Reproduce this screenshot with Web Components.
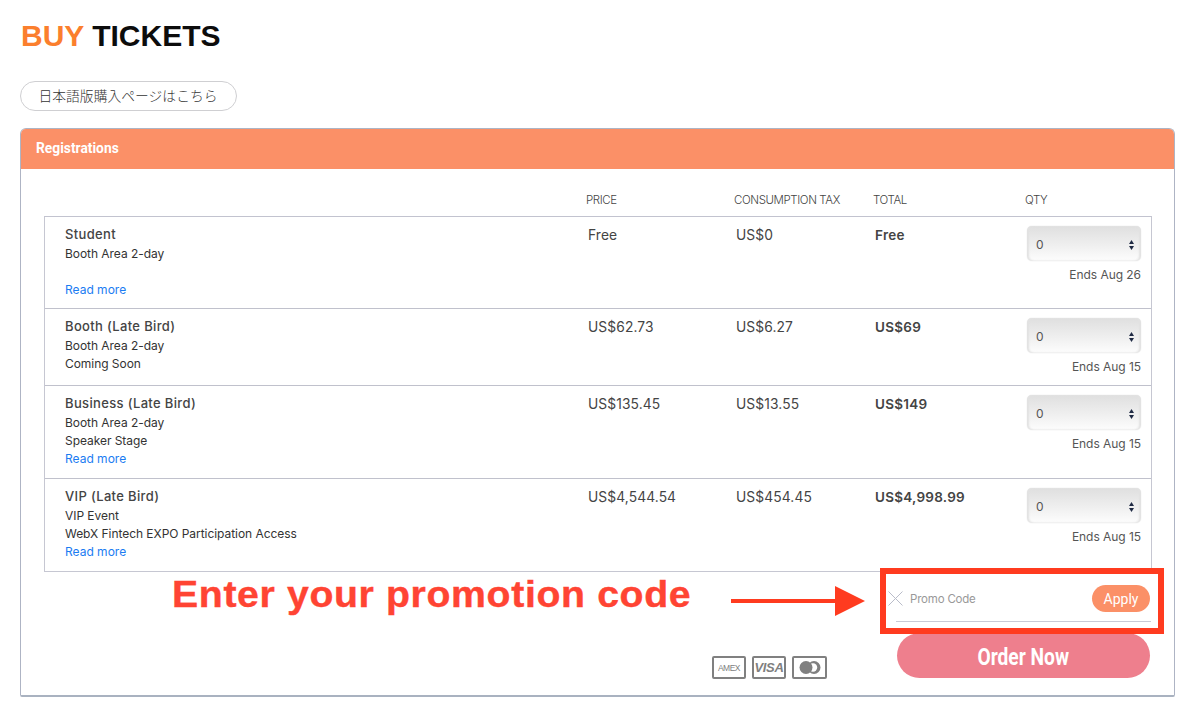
<!DOCTYPE html>
<html lang="en">
<head>
<meta charset="utf-8">
<title>Buy Tickets</title>
<style>
  html, body { margin: 0; background: #fff; }
  body { font-family: Inter, "Noto Sans CJK JP", sans-serif; color: #444; }
</style>
</head>
<body>
<buy-page>
  <ticket-panel heading="Registrations">
    <ticket-row name="Student" price="Free" tax="US$0" total="Free" ends="Ends Aug 26">
      <span>Booth Area 2-day</span>
      <span>&nbsp;</span>
      <a slot="more" href="#">Read more</a>
    </ticket-row>
    <ticket-row name="Booth (Late Bird)" price="US$62.73" tax="US$6.27" total="US$69" ends="Ends Aug 15">
      <span>Booth Area 2-day</span>
      <span>Coming Soon</span>
    </ticket-row>
    <ticket-row name="Business (Late Bird)" price="US$135.45" tax="US$13.55" total="US$149" ends="Ends Aug 15">
      <span>Booth Area 2-day</span>
      <span>Speaker Stage</span>
      <a slot="more" href="#">Read more</a>
    </ticket-row>
    <ticket-row name="VIP (Late Bird)" price="US$4,544.54" tax="US$454.45" total="US$4,998.99" ends="Ends Aug 15">
      <span>VIP Event</span>
      <span>WebX Fintech EXPO Participation Access</span>
      <a slot="more" href="#">Read more</a>
    </ticket-row>
  </ticket-panel>
  <promo-callout></promo-callout>
</buy-page>

<script>
const buyPageTemplate = document.createElement('template');
buyPageTemplate.innerHTML = `
  <style>
    :host {
      display: block;
      position: relative;
      height: 715px;
      box-sizing: border-box;
      padding: 0 25px 0 20px;
      overflow: hidden;
    }
    h1 {
      margin: 0;
      padding: 18px 0 0 1px;
      height: 81px;
      box-sizing: border-box;
      font: bold 30px/36px "Liberation Sans", sans-serif;
      color: #0c0c0c;
    }
    h1 span { color: #fb7f2d; }
    .lang {
      display: inline-flex;
      align-items: center;
      justify-content: center;
      box-sizing: border-box;
      width: 217px;
      height: 30px;
      margin-bottom: 17px;
      padding: 0 1px 3px 0;
      border: 1px solid #cfcfd2;
      border-radius: 15px;
      font: 300 13.8px "Noto Sans CJK JP", sans-serif;
      color: #333;
    }
    .lang-row { display: flex; }
  </style>
  <h1><span>BUY</span> TICKETS</h1>
  <div class="lang-row"><div class="lang">日本語版購入ページはこちら</div></div>
  <slot></slot>
`;

class BuyPage extends HTMLElement {
  constructor() {
    super();
    this.attachShadow({ mode: 'open' }).appendChild(buyPageTemplate.content.cloneNode(true));
  }
}

const ticketPanelTemplate = document.createElement('template');
ticketPanelTemplate.innerHTML = `
  <style>
    :host {
      display: block;
      box-sizing: border-box;
      height: 569px;
      border: 1px solid #aeb4c4;
      border-bottom: 2px solid #a9b2c0;
      border-radius: 6px 6px 2px 2px;
    }
    header {
      box-sizing: border-box;
      height: 40px;
      padding-left: 15px;
      background: #fb9067;
      border-radius: 5px 5px 0 0;
      font: bold 15px/38px Roboto, sans-serif;
      color: #fff;
    }
    header span { display: inline-block; transform: scaleX(.92); transform-origin: left; }
    .labels {
      display: grid;
      grid-template-columns: 542px 148px 139px 152px 125px;
      height: 47px;
      box-sizing: border-box;
      padding: 23px 0 0 23px;
      font-size: 11.5px;
      font-weight: 300;
      line-height: 16px;
      letter-spacing: -.4px;
      color: #444;
    }
    .table {
      margin: 0 22px 0 23px;
      border: 1px solid #c6c7d2;
      border-top-color: #c2c3cf;
    }
    .foot {
      display: flex;
      flex-direction: column;
      align-items: flex-end;
      padding-right: 24px;
    }
    .bottom {
      display: flex;
      align-items: flex-end;
      gap: 70px;
      margin-top: 11px;
    }
  </style>
  <header><span></span></header>
  <div class="labels">
    <span></span><span>PRICE</span><span>CONSUMPTION TAX</span><span>TOTAL</span><span>QTY</span>
  </div>
  <div class="table"><slot></slot></div>
  <div class="foot">
    <promo-field></promo-field>
    <div class="bottom">
      <pay-icons></pay-icons>
      <order-button></order-button>
    </div>
  </div>
`;

class TicketPanel extends HTMLElement {
  constructor() {
    super();
    this.attachShadow({ mode: 'open' }).appendChild(ticketPanelTemplate.content.cloneNode(true));
    this.shadowRoot.querySelector('header span').textContent = this.getAttribute('heading');
  }
}

const ticketRowTemplate = document.createElement('template');
ticketRowTemplate.innerHTML = `
  <style>
    :host {
      display: grid;
      grid-template-columns: 523px 148px 139px 152px 114px;
      box-sizing: border-box;
      padding-left: 20px;
      border-bottom: 1px solid #c0c1cc;
    }
    :host(:last-child) { border-bottom: 0; }
    .cell { padding-top: 8.5px; font-size: 13.8px; line-height: 18px; letter-spacing: .1px; color: #444; }
    .info { padding-top: 8px; padding-bottom: 10px; }
    :host(:first-child) .info { padding-bottom: 9px; }
    .name { font-weight: 500; font-size: 13px; letter-spacing: .35px; margin-bottom: 2px; }
    .lines { display: flex; flex-direction: column; }
    ::slotted(span) { font-size: 12px; line-height: 18px; letter-spacing: -.05px; color: #333; }
    ::slotted(a) { display: block; font-size: 12px; line-height: 18px; letter-spacing: 0; color: #1b7cf2; text-decoration: none; }
    .total { font-weight: 600; font-size: 13.5px; letter-spacing: .25px; }
    .qty { padding: 9px 0 9px; }
    .ends { margin-top: 5px; text-align: right; font-size: 12px; line-height: 18px; letter-spacing: -.05px; color: #555; }
  </style>
  <div class="cell info">
    <div class="name"></div>
    <div class="lines"><slot></slot></div>
    <slot name="more"></slot>
  </div>
  <div class="cell price"></div>
  <div class="cell tax"></div>
  <div class="cell total"></div>
  <div class="qty">
    <qty-select></qty-select>
    <div class="ends"></div>
  </div>
`;

class TicketRow extends HTMLElement {
  constructor() {
    super();
    this.attachShadow({ mode: 'open' }).appendChild(ticketRowTemplate.content.cloneNode(true));
    for (const key of ['name', 'price', 'tax', 'total', 'ends']) {
      this.shadowRoot.querySelector('.' + key).textContent = this.getAttribute(key);
    }
  }
}

const qtySelectTemplate = document.createElement('template');
qtySelectTemplate.innerHTML = `
  <style>
    :host {
      display: flex;
      align-items: center;
      justify-content: space-between;
      box-sizing: border-box;
      height: 35px;
      padding: 2px 7px 0 9px;
      border-radius: 5px;
      background: linear-gradient(#dfdfdf, #efefef 55%, #fdfdfd);
      box-shadow: inset 2px 0 2px #e2e2e2, inset -2px 0 2px #e2e2e2, 0 0 1px #ccc;
      font-size: 12px;
      color: #555;
    }
    svg { display: block; }
  </style>
  <span>0</span>
  <svg width="5" height="10" viewBox="0 0 5 10"><path d="M2.5 0 5 4H0zM0 6h5L2.5 10z" fill="#1f2a44"/></svg>
`;

class QtySelect extends HTMLElement {
  constructor() {
    super();
    this.attachShadow({ mode: 'open' }).appendChild(qtySelectTemplate.content.cloneNode(true));
  }
}

const promoFieldTemplate = document.createElement('template');
promoFieldTemplate.innerHTML = `
  <style>
    :host {
      display: flex;
      align-items: center;
      box-sizing: border-box;
      width: 255px;
      height: 50px;
      padding: 13px 1px 9px 0;
      margin-right: -1px;
      border-bottom: 1px solid #c9cad6;
      font-size: 11.5px;
      color: #999;
    }
    svg { flex: none; margin: 0 7px 0 -8px; }
    span { flex: 1; margin-top: 1px; letter-spacing: -.2px; }
    button {
      width: 58px;
      height: 27px;
      padding: 0;
      border: 0;
      border-radius: 14px;
      background: #fb9067;
      color: #fff;
      font: 14px Roboto, sans-serif;
    }
  </style>
  <svg width="15" height="15" viewBox="0 0 15 15"><path d="M.5.5l14 14M14.5.5l-14 14" stroke="#b9bcc9" fill="none"/></svg>
  <span>Promo Code</span>
  <button>Apply</button>
`;

class PromoField extends HTMLElement {
  constructor() {
    super();
    this.attachShadow({ mode: 'open' }).appendChild(promoFieldTemplate.content.cloneNode(true));
  }
}

const payIconsTemplate = document.createElement('template');
payIconsTemplate.innerHTML = `
  <style>
    :host { display: flex; gap: 6px; margin-bottom: -1px; }
    .card {
      box-sizing: border-box;
      display: flex;
      align-items: center;
      justify-content: center;
      width: 34px;
      height: 23px;
      border: 2px solid #808080;
      border-radius: 2px;
      color: #808080;
    }
    .amex { font: 8.5px "Liberation Sans", sans-serif; letter-spacing: -.5px; }
    .visa { font: italic bold 13px "Liberation Sans", sans-serif; letter-spacing: -.3px; }
    .mc { width: 35px; }
  </style>
  <div class="card amex">AMEX</div>
  <div class="card visa">VISA</div>
  <div class="card mc">
    <svg width="22" height="13" viewBox="0 0 22 13">
      <circle cx="15" cy="6.5" r="6.5" fill="#808080"/>
      <circle cx="14" cy="6.5" r="4.2" fill="#fff"/>
      <circle cx="7" cy="6.5" r="6.5" fill="#808080"/>
    </svg>
  </div>
`;

class PayIcons extends HTMLElement {
  constructor() {
    super();
    this.attachShadow({ mode: 'open' }).appendChild(payIconsTemplate.content.cloneNode(true));
  }
}

const orderButtonTemplate = document.createElement('template');
orderButtonTemplate.innerHTML = `
  <style>
    :host {
      display: flex;
      align-items: center;
      justify-content: center;
      box-sizing: border-box;
      width: 253px;
      height: 45px;
      padding-top: 2px;
      border-radius: 23px;
      background: #ee7f8d;
      color: #fff;
      font: bold 24px Roboto, sans-serif;
    }
    span { display: inline-block; transform: scaleX(.8); }
  </style>
  <span>Order Now</span>
`;

class OrderButton extends HTMLElement {
  constructor() {
    super();
    this.attachShadow({ mode: 'open' }).appendChild(orderButtonTemplate.content.cloneNode(true));
  }
}

// the red annotation drawn over the screenshot
const promoCalloutTemplate = document.createElement('template');
promoCalloutTemplate.innerHTML = `
  <style>
    :host { position: absolute; left: 0; top: 0; pointer-events: none; }
    .text {
      position: absolute;
      left: 172px;
      top: 573px;
      white-space: nowrap;
      font: bold 37px/44px "Liberation Sans", sans-serif;
      letter-spacing: .6px;
      color: #ff4433;
      -webkit-text-stroke: .4px #ff4433;
      transform: scaleX(1.06);
      transform-origin: left;
    }
    svg { position: absolute; left: 730px; top: 584px; }
    .box {
      position: absolute;
      left: 880px;
      top: 568px;
      width: 284px;
      height: 66px;
      box-sizing: border-box;
      border: 6px solid #ff3b1f;
    }
  </style>
  <div class="text">Enter your promotion code</div>
  <svg width="136" height="34" viewBox="0 0 136 34"><path d="M1 15h104V2l30 15-30 15V19H1z" fill="#ff3b1f"/></svg>
  <div class="box"></div>
`;

class PromoCallout extends HTMLElement {
  constructor() {
    super();
    this.attachShadow({ mode: 'open' }).appendChild(promoCalloutTemplate.content.cloneNode(true));
  }
}

window.customElements.define('qty-select', QtySelect);
window.customElements.define('promo-field', PromoField);
window.customElements.define('pay-icons', PayIcons);
window.customElements.define('order-button', OrderButton);
window.customElements.define('ticket-row', TicketRow);
window.customElements.define('ticket-panel', TicketPanel);
window.customElements.define('promo-callout', PromoCallout);
window.customElements.define('buy-page', BuyPage);
</script>
</body>
</html>
